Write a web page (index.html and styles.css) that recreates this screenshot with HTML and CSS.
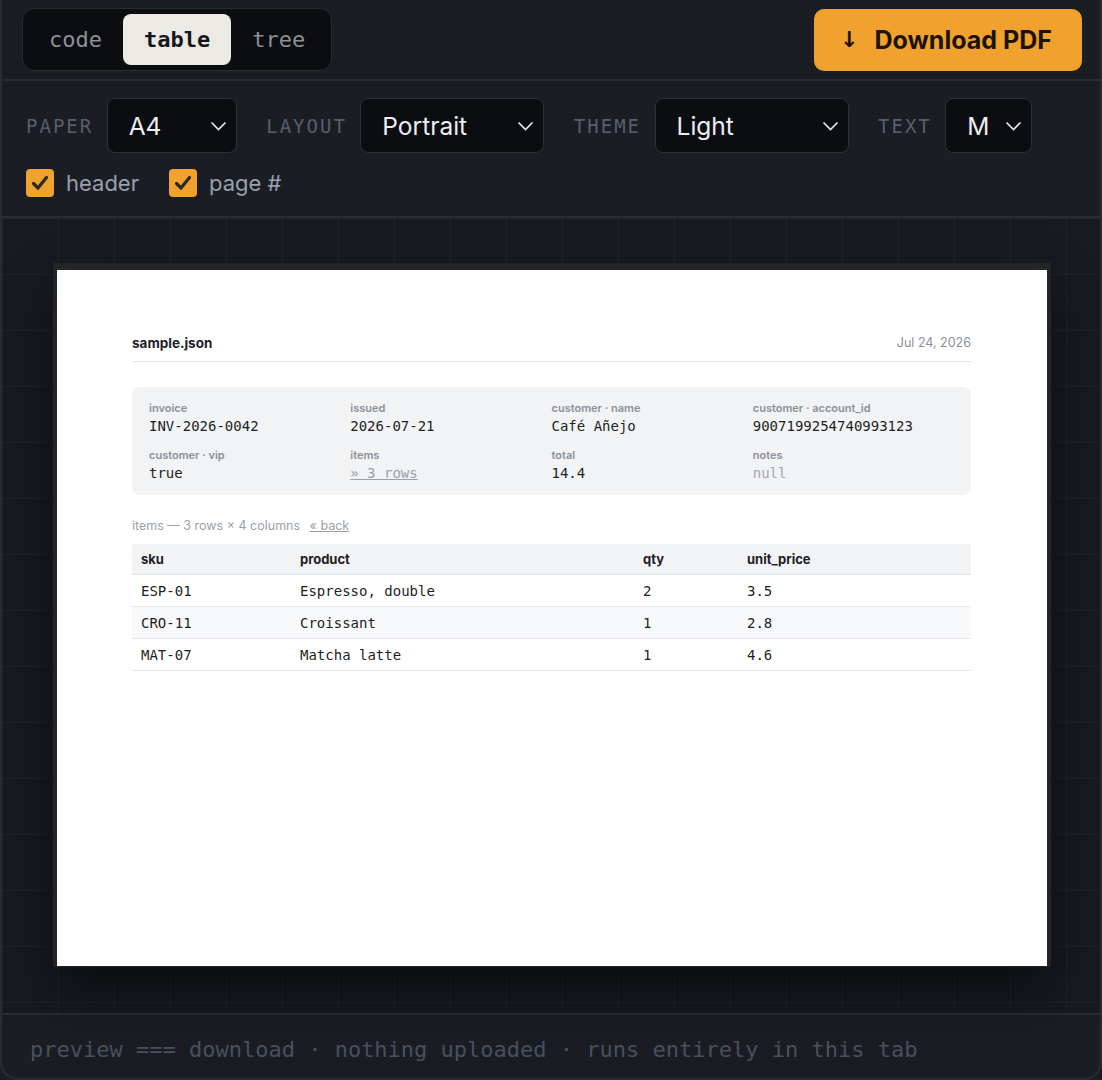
FILE: index.html
```html
<!DOCTYPE html>
<html lang="en">
  <head>
    <meta charset="UTF-8" />
    <meta name="viewport" content="width=device-width, initial-scale=1.0" />
    <title>json to pdf</title>
    <link rel="stylesheet" href="styles.css">
  </head>

  <body>
    <div class="app">
      <header class="topbar">
        <div class="seg">
          <span class="seg-item">code</span>
          <span class="seg-item active">table</span>
          <span class="seg-item">tree</span>
        </div>
        <button class="download"><span class="arrow">↓</span> Download PDF</button>
      </header>

      <section class="settings">
        <div class="row">
          <label class="field">
            <span class="label">Paper</span>
            <span class="select w-paper">A4
              <svg class="chev" viewBox="0 0 16 10"><polyline points="1,1.5 8,8.5 15,1.5" /></svg>
            </span>
          </label>
          <label class="field">
            <span class="label">Layout</span>
            <span class="select w-layout">Portrait
              <svg class="chev" viewBox="0 0 16 10"><polyline points="1,1.5 8,8.5 15,1.5" /></svg>
            </span>
          </label>
          <label class="field">
            <span class="label">Theme</span>
            <span class="select w-theme">Light
              <svg class="chev" viewBox="0 0 16 10"><polyline points="1,1.5 8,8.5 15,1.5" /></svg>
            </span>
          </label>
          <label class="field">
            <span class="label">Text</span>
            <span class="select w-text">M
              <svg class="chev" viewBox="0 0 16 10"><polyline points="1,1.5 8,8.5 15,1.5" /></svg>
            </span>
          </label>
        </div>
        <div class="row checks">
          <label class="check">
            <span class="box"><svg viewBox="0 0 28 28"><path d="M7.5 14.5 L12 19 L20.5 8.5" /></svg></span>
            header
          </label>
          <label class="check">
            <span class="box"><svg viewBox="0 0 28 28"><path d="M7.5 14.5 L12 19 L20.5 8.5" /></svg></span>
            page #
          </label>
        </div>
      </section>

      <main class="preview">
        <div class="paper">
          <div class="doc-head">
            <span class="doc-name">sample.json</span>
            <span class="doc-date">Jul 24, 2026</span>
          </div>

          <div class="meta">
            <div class="meta-cell">
              <span class="k">invoice</span>
              <span class="v">INV-2026-0042</span>
            </div>
            <div class="meta-cell">
              <span class="k">issued</span>
              <span class="v">2026-07-21</span>
            </div>
            <div class="meta-cell">
              <span class="k">customer · name</span>
              <span class="v">Café Añejo</span>
            </div>
            <div class="meta-cell">
              <span class="k">customer · account_id</span>
              <span class="v">9007199254740993123</span>
            </div>
            <div class="meta-cell">
              <span class="k">customer · vip</span>
              <span class="v">true</span>
            </div>
            <div class="meta-cell">
              <span class="k">items</span>
              <a class="v link">» 3 rows</a>
            </div>
            <div class="meta-cell">
              <span class="k">total</span>
              <span class="v">14.4</span>
            </div>
            <div class="meta-cell">
              <span class="k">notes</span>
              <span class="v muted">null</span>
            </div>
          </div>

          <div class="caption">items — 3 rows × 4 columns <a class="back">« back</a></div>

          <table class="grid">
            <colgroup>
              <col class="c-sku" />
              <col class="c-product" />
              <col class="c-qty" />
              <col class="c-price" />
            </colgroup>
            <thead>
              <tr><th>sku</th><th>product</th><th>qty</th><th>unit_price</th></tr>
            </thead>
            <tbody>
              <tr><td>ESP-01</td><td>Espresso, double</td><td>2</td><td>3.5</td></tr>
              <tr><td>CRO-11</td><td>Croissant</td><td>1</td><td>2.8</td></tr>
              <tr><td>MAT-07</td><td>Matcha latte</td><td>1</td><td>4.6</td></tr>
            </tbody>
          </table>
        </div>
      </main>

      <footer class="foot">preview === download · nothing uploaded · runs entirely in this tab</footer>
    </div>
  </body>
</html>
```

FILE: styles.css
```css
* {
  margin: 0;
  padding: 0;
  box-sizing: border-box;
}
:root {
  --bg: #1a1d24;
  --bg-deep: #0b0d11;
  --line: #282c35;
  --accent: #f0a12e;
  --mono: "DejaVu Sans Mono", "Liberation Mono", monospace;
  --sans: "Inter", "Noto Sans", "Liberation Sans", sans-serif;
}
body {
  background-color: var(--bg);
  font-family: var(--sans);
  width: 1102px;
  height: 1080px;
  overflow: hidden;
}
.app {
  height: 1080px;
  display: flex;
  flex-direction: column;
  border: 2px solid var(--line);
  border-top: 0;
  border-radius: 0 0 18px 18px;
  overflow: hidden;
}
.topbar {
  display: flex;
  align-items: center;
  justify-content: space-between;
  padding: 8px 18px 8px 20px;
  border-bottom: 2px solid var(--line);
}
.seg {
  display: flex;
  padding: 5px;
  border: 1px solid var(--line);
  border-radius: 12px;
  background-color: var(--bg-deep);
}
.seg-item {
  display: flex;
  align-items: center;
  height: 51px;
  padding: 0 21px;
  font-family: var(--mono);
  font-size: 22px;
  color: #8b9099;
  border-radius: 8px;
}
.seg-item.active {
  background-color: #ebeae4;
  color: #15171b;
  font-weight: bold;
}
.download {
  display: flex;
  align-items: center;
  gap: 16px;
  height: 62px;
  width: 268px;
  justify-content: center;
  padding-right: 4px;
  border: 0;
  border-radius: 10px;
  background-color: var(--accent);
  color: #1c1306;
  font-family: var(--sans);
  font-size: 25px;
  font-weight: 700;
}
.download .arrow {
  font-family: "DejaVu Sans", sans-serif;
  font-size: 22px;
}
.settings {
  padding: 17px 24px 19px;
  border-bottom: 2px solid var(--line);
  display: flex;
  flex-direction: column;
  gap: 16px;
}
.row {
  display: flex;
  align-items: center;
  gap: 29.5px;
}
.field {
  display: flex;
  align-items: center;
  gap: 13.5px;
}
.label {
  font-family: var(--mono);
  font-size: 19px;
  letter-spacing: 2px;
  text-transform: uppercase;
  color: #595f6b;
}
.select {
  display: flex;
  align-items: center;
  justify-content: space-between;
  height: 55px;
  padding: 0 9px 0 21px;
  border: 1.5px solid #2c303a;
  border-radius: 8px;
  background-color: var(--bg-deep);
  color: #eceef1;
  font-size: 24.5px;
}
.w-paper { width: 130px; }
.w-layout { width: 184px; }
.w-theme { width: 194px; }
.w-text { width: 87px; }
.chev {
  width: 17px;
  height: 10px;
  fill: none;
  stroke: #e4e6ea;
  stroke-width: 1.7;
}
.checks {
  gap: 30px;
}
.check {
  display: flex;
  align-items: center;
  gap: 12px;
  font-size: 22px;
  color: #99a0aa;
}
.box {
  width: 28px;
  height: 28px;
  border-radius: 4px;
  background-color: var(--accent);
  display: flex;
}
.box svg {
  width: 28px;
  height: 28px;
  fill: none;
  stroke: #2b2b2b;
  stroke-width: 3.2;
  stroke-linecap: round;
  stroke-linejoin: round;
}
.preview {
  flex: 1;
  display: flex;
  align-items: center;
  justify-content: center;
  padding-left: 2px;
  background-color: #171a21;
  background-image:
    linear-gradient(rgba(255, 255, 255, 0.035) 1px, transparent 1px),
    linear-gradient(90deg, rgba(255, 255, 255, 0.035) 1px, transparent 1px);
  background-size: 56px 56px;
  border-bottom: 2px solid var(--line);
}
.paper {
  width: 990px;
  height: 696px;
  margin-top: 4px;
  background-color: #fff;
  padding: 63px 76px 0 75px;
  box-shadow: 0 -3px 0 4px #232427, 0 26px 50px rgba(0, 0, 0, 0.55);
}
.doc-head {
  display: flex;
  justify-content: space-between;
  align-items: center;
  height: 29px;
  padding-bottom: 8px;
  border-bottom: 1px solid #e3e5e8;
}
.doc-name {
  font-size: 13.5px;
  font-weight: 700;
  color: #1f2125;
}
.doc-date {
  font-size: 12.5px;
  color: #8b9098;
}
.meta {
  margin-top: 25px;
  display: grid;
  grid-template-columns: repeat(4, 1fr);
  row-gap: 12px;
  padding: 14px 17px 12px;
  border-radius: 8px;
  background-color: #f1f3f5;
}
.meta-cell {
  display: flex;
  flex-direction: column;
}
.k {
  font-size: 11px;
  line-height: 14px;
  font-weight: 600;
  color: #8c9199;
  margin-bottom: 1px;
}
.v {
  font-family: var(--mono);
  font-size: 14px;
  line-height: 20px;
  color: #1d1f23;
}
.v.link {
  color: #9aa0a8;
  text-decoration: underline;
}
.v.muted {
  color: #a2a7ae;
}
.caption {
  margin-top: 23px;
  font-size: 12.5px;
  line-height: 16px;
  color: #9a9fa7;
}
.caption .back {
  margin-left: 6px;
  text-decoration: underline;
}
.grid {
  margin-top: 10px;
  width: 100%;
  border-collapse: collapse;
}
.c-sku { width: 159px; }
.c-product { width: 343px; }
.c-qty { width: 104px; }
.grid th {
  text-align: left;
  height: 31px;
  padding-left: 9px;
  font-size: 13px;
  font-weight: 700;
  color: #1f2125;
  background-color: #f1f3f5;
  border-bottom: 1px solid #e1e4e8;
}
.grid td {
  height: 32px;
  padding-left: 9px;
  font-family: var(--mono);
  font-size: 14px;
  color: #1d1f23;
  border-bottom: 1px solid #e6e8eb;
}
.grid tbody tr:nth-child(2) td {
  background-color: #f8f9fa;
}
.foot {
  height: 63px;
  display: flex;
  align-items: center;
  padding-left: 28px;
  padding-top: 6px;
  font-family: var(--mono);
  font-size: 22px;
  color: #4a505b;
}
```
